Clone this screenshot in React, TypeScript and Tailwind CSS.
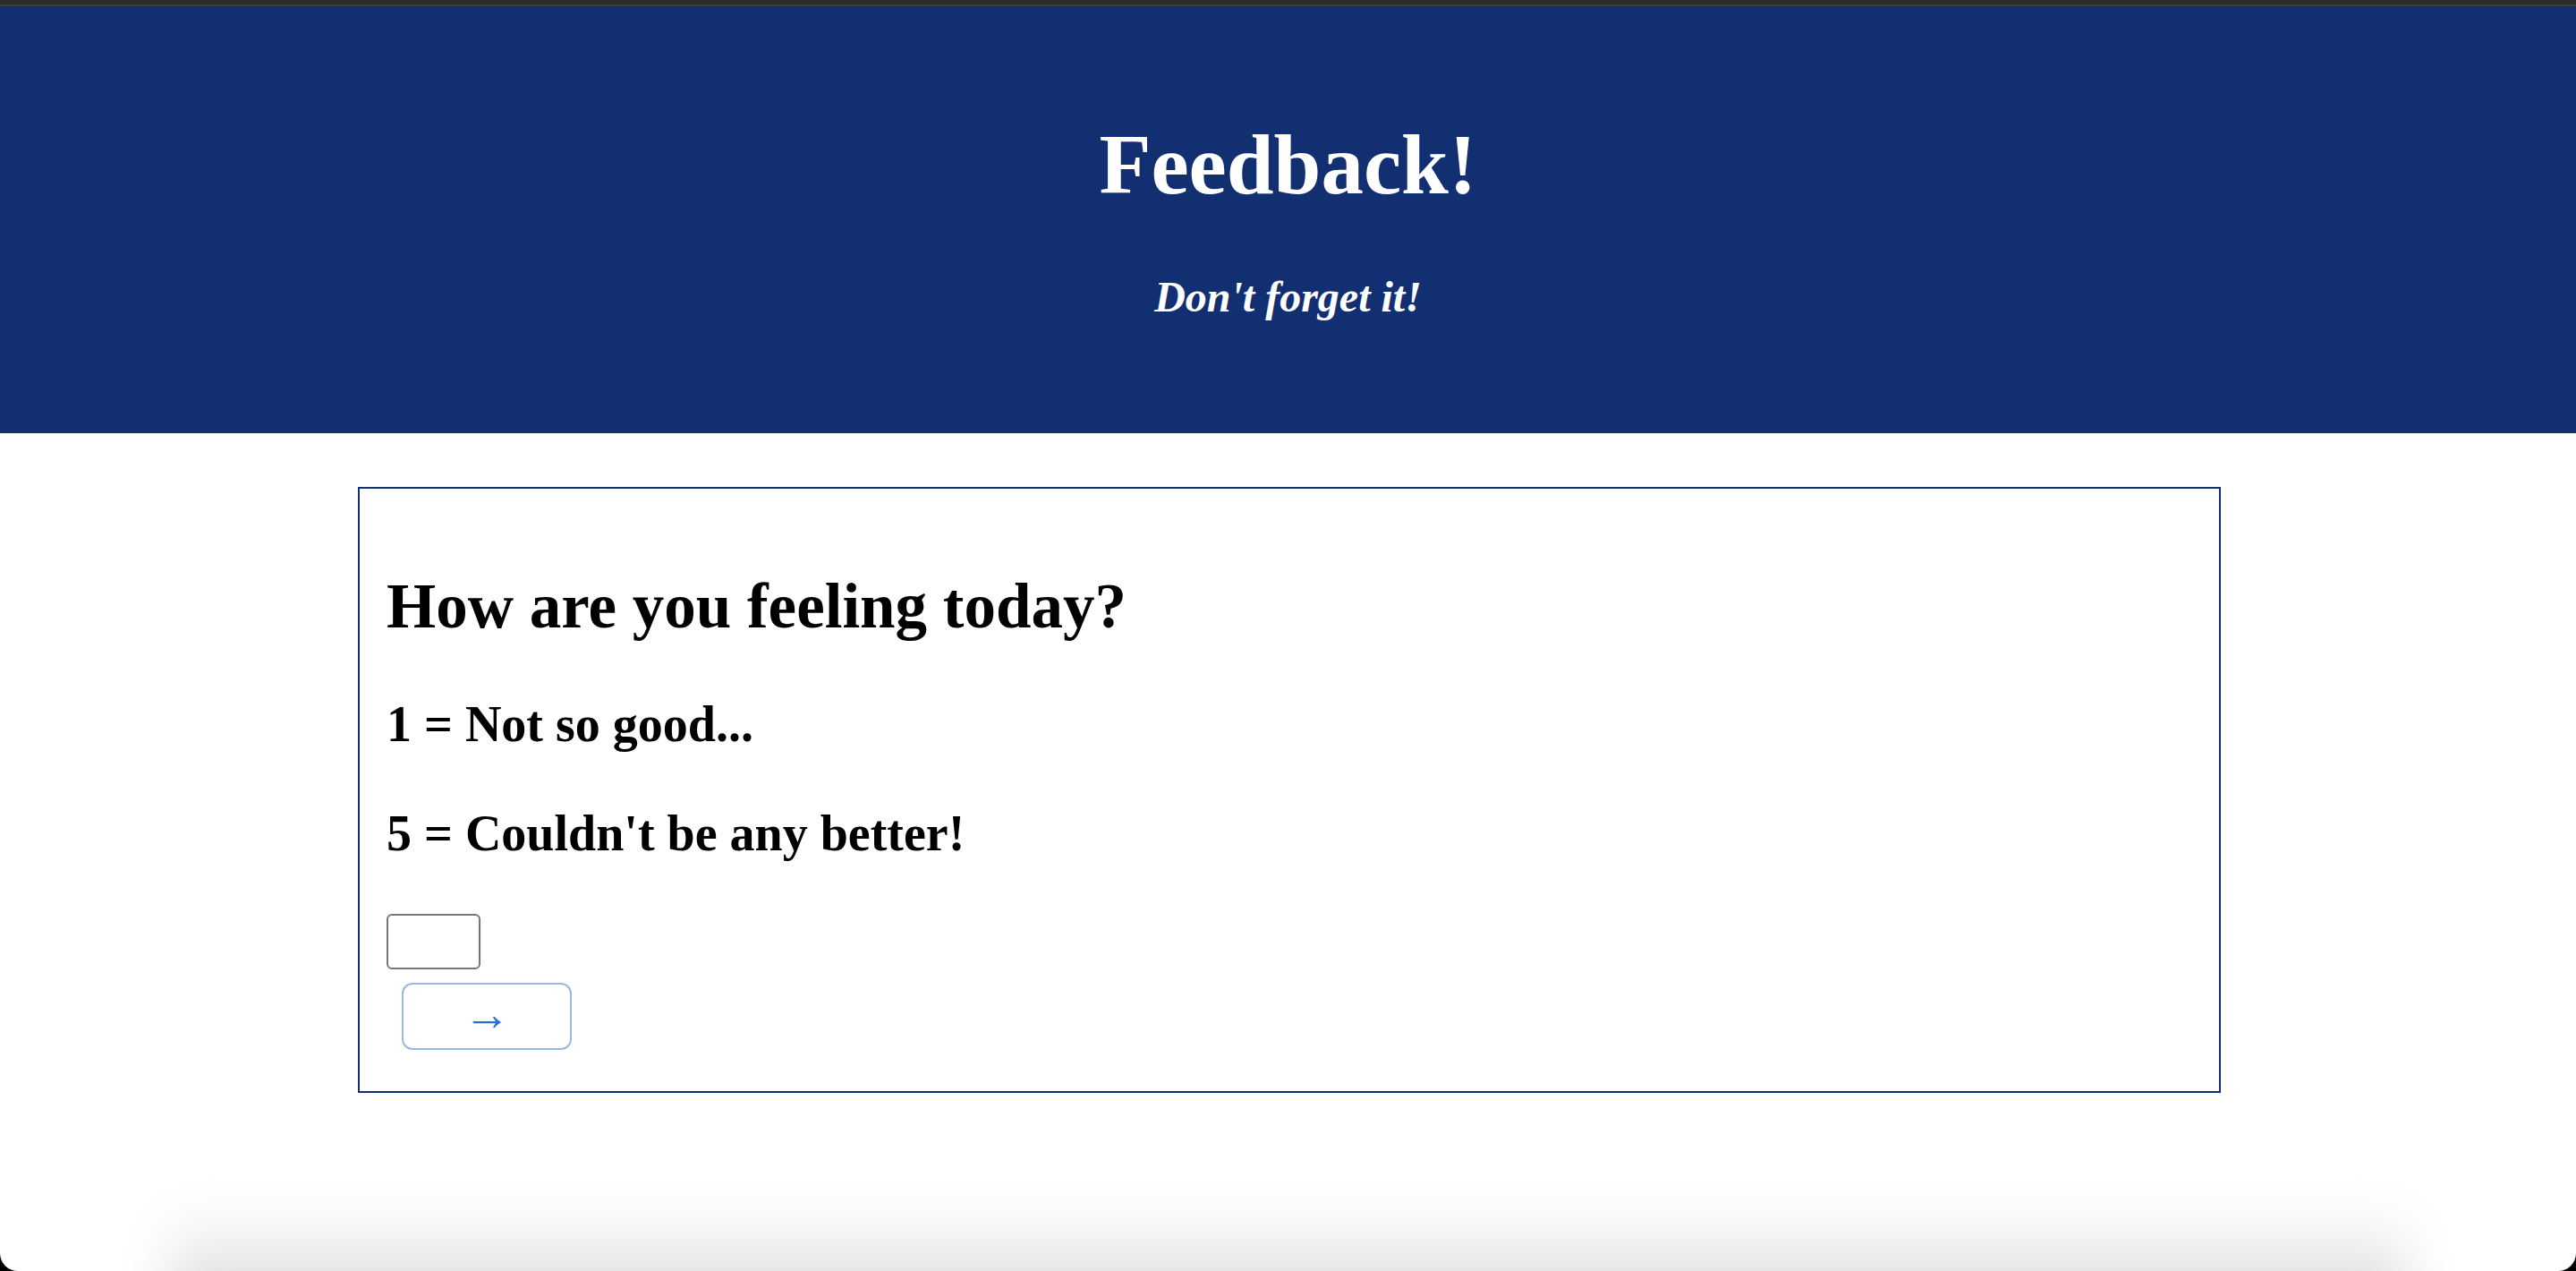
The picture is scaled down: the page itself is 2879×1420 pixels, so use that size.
import React from "react";

export default function App() {
  return (
    <div className="w-[2879px] h-[1420px] bg-black overflow-hidden">
      <div
        className="relative flex flex-col w-full h-full bg-white rounded-b-[20px] overflow-hidden"
        style={{ fontFamily: '"Liberation Serif", "Times New Roman", serif' }}
      >
        <div className="h-[5px] bg-[#2b2b2b]" />
        <div className="h-[2px] bg-[#3c3c3c]" />
        <header className="bg-[#122f71] text-white text-center pt-[130px] pb-[128px]">
          <h1 className="text-[95px] leading-none font-bold">Feedback!</h1>
          <p className="mt-[76px] text-[48px] leading-none font-bold italic">Don't forget it!</p>
        </header>

        <main className="mt-[60px] ml-[400px] w-[2082px] border-2 border-[#122f71] pl-[30px] pt-[96px] pb-[46px] text-black">
          <h2 className="text-[71px] leading-none font-bold">How are you feeling today?</h2>
          <h3 className="mt-[68px] text-[56px] leading-none font-bold">1 = Not so good...</h3>
          <h3 className="mt-[66px] text-[56px] leading-none font-bold">5 = Couldn't be any better!</h3>
          <div className="mt-[62px] flex flex-col items-start">
            <input
              type="text"
              className="w-[105px] h-[62px] border-2 border-[#767676] rounded-[6px] bg-white outline-none"
            />
            <button className="mt-[15px] ml-[17px] w-[190px] h-[75px] border-2 border-[#97b9e9] rounded-[12px] bg-white flex items-center justify-center text-[#2f6fd4] text-[52px] leading-none">
              <span className="-mt-[3px]">→</span>
            </button>
          </div>
        </main>

        <div className="mt-auto mx-[190px] h-[140px] mb-[-70px] bg-gradient-to-b from-white to-[#cdcdcd] blur-[30px]" />
      </div>
    </div>
  );
}
